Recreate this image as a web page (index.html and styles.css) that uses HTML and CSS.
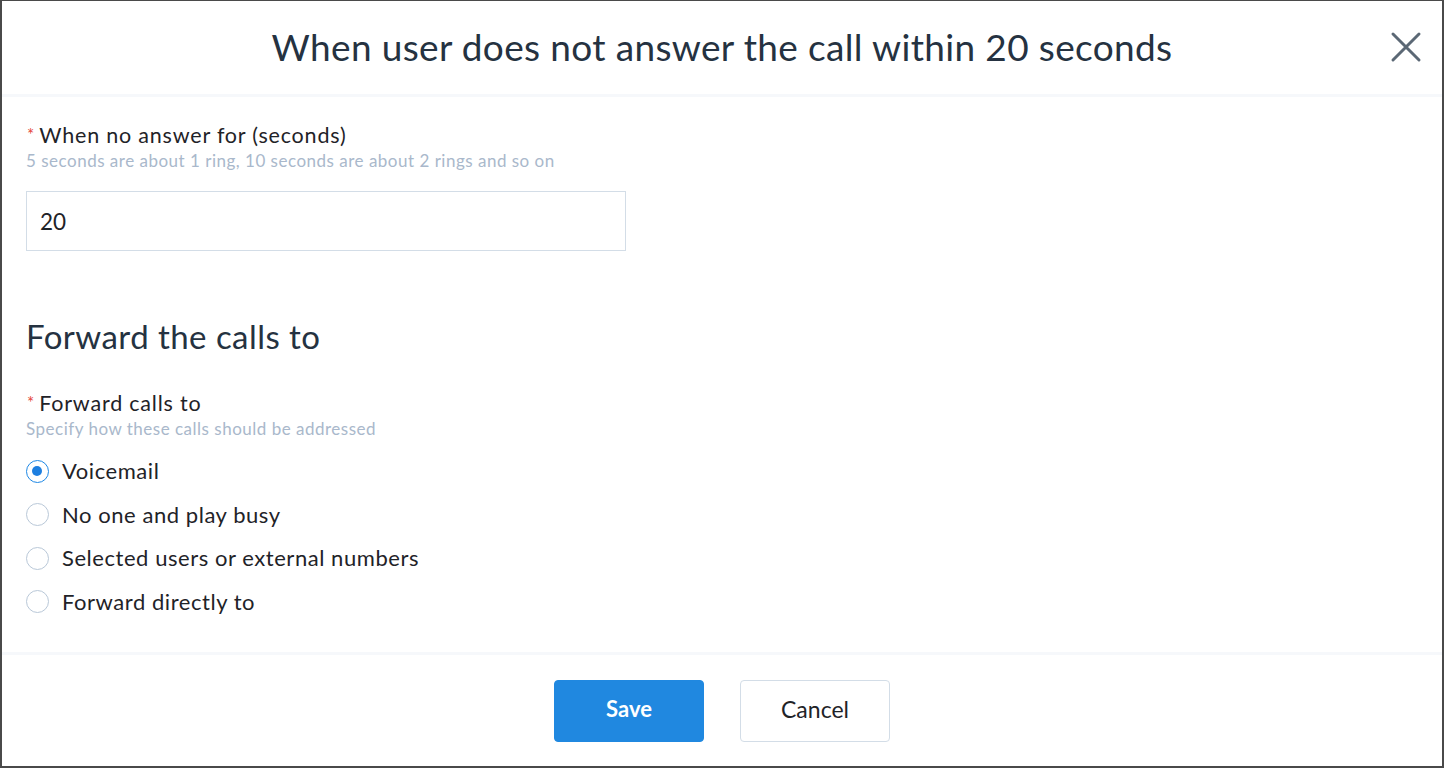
FILE: index.html
```html
<!DOCTYPE html>
<html>
<head>
<meta charset="utf-8">
<link rel="stylesheet" href="styles.css">
</head>
<body>
<div class="frame">
  <header class="head">
    <h1 class="title">When user does not answer the call within 20 seconds</h1>
    <button class="close" aria-label="Close">
      <svg width="32" height="32" viewBox="0 0 32 32"><path d="M3 3 L29 29 M29 3 L3 29" stroke="#5b6875" stroke-width="3" stroke-linecap="round" fill="none"/></svg>
    </button>
  </header>
  <main class="body">
    <div class="field">
      <div class="label"><span class="req">*</span>When no answer for (seconds)</div>
      <div class="hint">5 seconds are about 1 ring, 10 seconds are about 2 rings and so on</div>
      <div class="input">20</div>
    </div>
    <h2 class="section">Forward the calls to</h2>
    <div class="field">
      <div class="label"><span class="req">*</span>Forward calls to</div>
      <div class="hint">Specify how these calls should be addressed</div>
      <div class="radios">
        <div class="radio"><span class="dot on"></span>Voicemail</div>
        <div class="radio"><span class="dot"></span>No one and play busy</div>
        <div class="radio"><span class="dot"></span>Selected users or external numbers</div>
        <div class="radio"><span class="dot"></span>Forward directly to</div>
      </div>
    </div>
  </main>
  <footer class="foot">
    <button class="btn primary">Save</button>
    <button class="btn">Cancel</button>
  </footer>
</div>
</body>
</html>
```
FILE: styles.css
```css
* { box-sizing: border-box; }
html, body { margin: 0; padding: 0; background: #fff; }
body { font-family: "Lato", "Open Sans", sans-serif; color: #1f2328; }
.frame {
  width: 1444px; height: 768px;
  border: 2px solid #4a4a4a; border-top-width: 1px;
  display: flex; flex-direction: column;
  background: #fff;
}
.head {
  position: relative;
  height: 96px;
  display: flex; align-items: center; justify-content: center;
  border-bottom: 3px solid #f6f8fb;
  flex: none;
  padding-bottom: 2px;
}
.title { margin: 0; font-weight: 400; font-size: 37px; color: #253241; letter-spacing: 0.35px; }
.close {
  position: absolute; right: 20px; top: 30px;
  background: none; border: 0; padding: 0; width: 32px; height: 32px; cursor: pointer;
}
.body { flex: 1; padding: 25px 24px 0 24px; border-bottom: 3px solid #f6f8fb; }
.field { display: flex; flex-direction: column; }
.label { font-size: 21.5px; line-height: 26px; color: #1f2328; letter-spacing: 0.8px; }
.req { color: #e5473a; font-size: 17px; margin-right: 5px; vertical-align: 2px; margin-left: 1px; letter-spacing: 0; }
.hint { font-size: 17px; line-height: 20px; color: #a9b8cb; margin-top: 3px; letter-spacing: 0.5px; }
.input {
  margin-top: 20px;
  width: 600px; height: 60px;
  border: 1px solid #d3dde7;
  padding: 0 13px;
  display: flex; align-items: center;
  font-size: 22.5px; color: #1f2328;
}
.section { margin: 68px 0 37px 0; font-size: 33px; font-weight: 400; color: #253241; line-height: 34px; letter-spacing: 0.45px; }
.radios { display: flex; flex-direction: column; margin-top: 19px; gap: 17.5px; }
.radio { display: flex; align-items: center; font-size: 22px; line-height: 26px; color: #1f2328; letter-spacing: 0.55px; }
.dot {
  width: 23px; height: 23px; border-radius: 50%;
  border: 1px solid #b9c8d8; margin-right: 13px; margin-left: 0;
  flex: none; position: relative;
}
.dot.on { border: 1.5px solid #1e88e5; }
.dot.on::after {
  content: ""; position: absolute; left: 5px; top: 5px;
  width: 10px; height: 10px; border-radius: 50%; background: #1e7fe0;
}
.foot {
  height: 111px; flex: none;
  display: flex; align-items: center; justify-content: center; gap: 36px;
}
.btn {
  width: 150px; height: 62px; border-radius: 4px;
  border: 1px solid #d3dde7; background: #fff;
  font-family: inherit; font-size: 23px; color: #1f2328;
  padding: 0 0 4px 0;
}
.primary { background: #2088e0; border-color: #2088e0; color: #fff; font-weight: 700; font-size: 22px; }
```
